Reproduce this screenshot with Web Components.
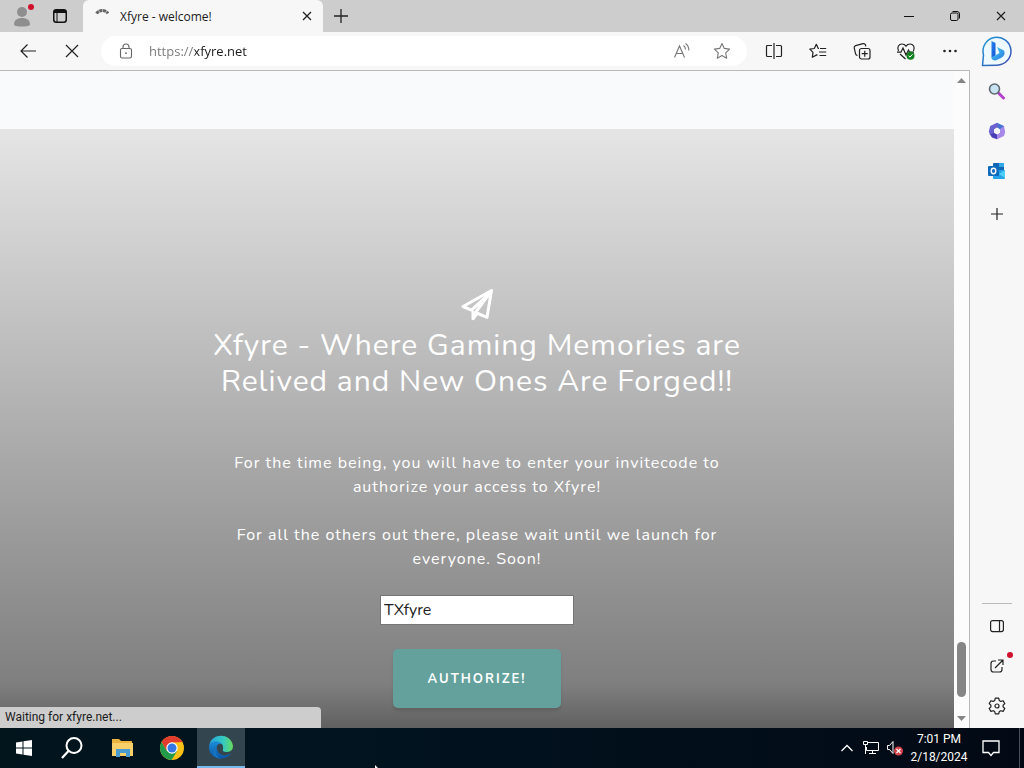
<!DOCTYPE html>
<html lang="en">
<head>
<meta charset="utf-8">
<title>Xfyre - welcome!</title>
<style>
html, body { height: 100%; margin: 0; }
body { font-family: "Open Sans", "Noto Sans", sans-serif; font-size: 12px; color: #1b1b1b; overflow: hidden; }
</style>
</head>
<body>
<desktop-screen></desktop-screen>
<script>
const ICONS = {
  person: [24, '<circle cx="12" cy="8" r="5" fill="#8e8e8e"/><path d="M4 21c0-5 3-7 8-7s8 2 8 7c-3 2-13 2-16 0z" fill="#8e8e8e"/><circle cx="21" cy="3" r="3" fill="#d0112b"/>'],
  workspace: [14, '<rect x=".75" y=".75" width="12.5" height="12.5" rx="2.5" fill="none" stroke="#111" stroke-width="1.5"/><path d="M1 1h12v3H1z" fill="#111"/><path d="M4 4v9" stroke="#111"/>'],
  spinner: [14, '<path d="M1.500 4.500A7 7 0 0 1 13 4.500" fill="none" stroke="#666" stroke-width="3" stroke-dasharray="3.200 .5"/>'],
  close: [10, '<path d="M1 1l8 8M9 1L1 9" stroke="#222" stroke-width="1.3"/>'],
  plus: [14, '<path d="M7 0v14M0 7h14" stroke="#222" stroke-width="1.3"/>'],
  plusSmall: [14, '<path d="M7 1v12M1 7h12" stroke="#222" stroke-width="1.200"/>'],
  minimize: [10, '<path d="M0 5.5h10" stroke="#111"/>'],
  restore: [10, '<rect x=".5" y="2" width="7.5" height="7.5" rx="1.5" fill="none" stroke="#111"/><path d="M2.5 .5H7a2.5 2.5 0 0 1 2.5 2.5v4.500" fill="none" stroke="#111"/>'],
  back: [16, '<path d="M7.500 1.500L1 8l6.500 6.500M1 8h15" fill="none" stroke="#222" stroke-width="1.2"/>'],
  stop: [14, '<path d="M1 1l12 12M13 1L1 13" stroke="#222" stroke-width="1.2"/>'],
  lock: [16, '<rect x="2.500" y="5.500" width="11" height="9.500" rx="1.500" fill="none" stroke="#666" stroke-width="1.1"/><path d="M5 5.500V4a3 3 0 0 1 6 0v1.500" fill="none" stroke="#666" stroke-width="1.1"/><circle cx="8" cy="10.200" r=".9" fill="#666"/>'],
  aloud: [18, '<path d="M1.500 15.500L6.500 4l5 11.500M3.200 11.500h6.600M10.500 3.500q2 1.500 2 4M12.500 1.500q3.500 2.500 3.300 7" fill="none" stroke="#777" stroke-width="1.100"/>'],
  star: [18, '<path d="M9 1.500l2.300 4.900 5.300.7-3.900 3.700 1 5.400L9 13.600l-4.700 2.600 1-5.400L1.400 7.100l5.300-.7z" fill="none" stroke="#777" stroke-width="1.100" stroke-linejoin="round"/>'],
  split: [18, '<path d="M9 1v16M7 3.500H2.500Q1.500 3.500 1.500 4.500v9q0 1 1 1H7M11 3.500h4.500q1 0 1 1v9q0 1-1 1H11" fill="none" stroke="#222" stroke-width="1.200"/>'],
  favs: [18, '<path d="M10 6.500H9.300L7.300 2.300l-2 4.200-4.500.7 3.200 3.200-.7 4.800 4.400-2.300.8.400M11 6.500h6.200M10 10h7.200M10.500 13.500h6.700" fill="none" stroke="#222" stroke-width="1.200" stroke-linejoin="round"/>'],
  collections: [18, '<rect x="6.500" y="6.500" width="10.500" height="10.500" rx="2" fill="none" stroke="#222" stroke-width="1.200"/><path d="M11.750 8.700v6M8.700 11.700h6M4.500 13.500Q3 13.200 2.600 11.800L1.200 6Q.9 4.200 2.600 3.600L10 1.600q1.800-.4 2.400 1.200l.4 1.500" fill="none" stroke="#222" stroke-width="1.200"/>'],
  heart: [20, '<path d="M2.500 10C.5 6 3 3 6 3q2.500 0 4 2.200Q11.500 3 14 3c3 0 5.500 3 3.500 7M4 13l5.500 5M1 11.200h4l2-4.200 3 7 2.500-5 1.200 2.200H18" fill="none" stroke="#222" stroke-width="1.200"/><circle cx="14.500" cy="14.700" r="4" fill="#138021"/><path d="M12.600 14.800l1.400 1.300 2.500-2.800" fill="none" stroke="#fff"/>'],
  dots: [16, '<g fill="#222"><circle cx="2.500" cy="8" r="1.300"/><circle cx="8" cy="8" r="1.300"/><circle cx="13.500" cy="8" r="1.300"/></g>'],
  bing: [32, '<defs><linearGradient id="a" x2="1" y2="1"><stop stop-color="#1b9bd8"/><stop offset="1" stop-color="#404ab0"/></linearGradient><linearGradient id="b" x2="1" y2="1"><stop stop-color="#2785f0"/><stop offset="1" stop-color="#1553d0"/></linearGradient><linearGradient id="c" x2="1" y2="1"><stop stop-color="#45d0f7"/><stop offset="1" stop-color="#2b78e0"/></linearGradient></defs><path d="M1.500 30.500L2.500 20A14 14 0 1 1 16 30.200z" fill="#eefaff" stroke="url(#a)" stroke-width="1.500" stroke-linejoin="round"/><path d="M10.500 6l4 2v12.500l-4 2.500z" fill="url(#b)"/><path d="M16 12l7 3.500q2 4.500-3 7.500l-5.500 2.500q-4 0-4-3l8-4.500z" fill="url(#c)"/>'],
  searchColor: [18, '<path d="M10.500 11l5 5" stroke="#b441ca" stroke-width="3" stroke-linecap="round"/><circle cx="6.500" cy="7" r="5" fill="#c8e4f2" stroke="#606970" stroke-width="1.600"/>'],
  m365: [18, '<path d="M9 .8L16 4v5h-4.500V7.300L9 5.800z" fill="#4674d2"/><path d="M9 .8L2.200 4 .8 9.500 2 13l4.500-2V7.300l4-2.500z" fill="#6c62cf"/><path d="M2 12.500L6.500 10.500 9 12.300l4.500 1L9 17.300 4 15.500z" fill="#4c3eb4"/><path d="M16 4l1.200 6-1.200 4-7 3.300v-5l2.500-1.500V7.500z" fill="#a688e8"/><path d="M9 5.600l3 1.800v3.400l-3 1.800-3-1.800V7.400z" fill="#f7f7f7"/>'],
  outlook: [18, '<rect x="5" y="1" width="11" height="9" rx="1" fill="#1066b5"/><path d="M11 1h5v4h-5z" fill="#32a9e7"/><path d="M5 8h12v8q0 1-1 1H6q-1 0-1-1z" fill="#25a4e8"/><path d="M17 8v8l-6-4z" fill="#50d0f8"/><rect x="0" y="4" width="11" height="10" rx="1" fill="#0f6cbd"/><ellipse cx="5.500" cy="9" rx="2.300" ry="2.700" fill="none" stroke="#fff" stroke-width="1.400"/>'],
  pane: [14, '<rect x=".6" y="1.600" width="12.800" height="11" rx="2" fill="none" stroke="#222" stroke-width="1.200"/><path d="M9.500 2v10" stroke="#222" stroke-width="1.200"/>'],
  external: [14, '<path d="M6 2H3.500Q1 2 1 4.500v6Q1 13 3.500 13h6Q12 13 12 10.500V8M8 1h5v5M13 1L5 9" fill="none" stroke="#222" stroke-width="1.200"/>'],
  gear: [18, '<path d="M7.300 1.200h3.400l.6 2.300 1.500.9 2.300-.7 1.700 2.900-1.700 1.600v1.700l1.700 1.600-1.700 2.900-2.300-.7-1.500.9-.6 2.300H7.300l-.6-2.300-1.500-.9-2.300.7-1.700-2.900 1.700-1.600V8.200L1.200 6.600l1.700-2.900 2.300.7 1.500-.9z" fill="none" stroke="#222" stroke-width="1.200" stroke-linejoin="round"/><circle cx="9" cy="9" r="2" fill="none" stroke="#222" stroke-width="1.200"/>'],
  up: [9, '<path d="M0 7L4.500 2 9 7z" fill="#858585"/>'],
  down: [9, '<path d="M0 2l4.500 5L9 2z" fill="#858585"/>'],
  plane: [32, '<path d="M30.500 1.500L2 17.500l8.500 3.600L28 5 14.500 23.500l11.500 4.800z" fill="none" stroke="#fff" stroke-width="3" stroke-linejoin="round"/><path d="M10.500 20.500v10q1.500 1.500 3 0l4-5.500-3-1.500z" fill="#fff"/>'],
  windows: [18, '<path d="M1 3.500l6.500-1V8.500H1zM8.500 2.300L17 1v7.500H8.500zM1 9.500h6.500v6L1 14.500zM8.500 9.500H17V17l-8.500-1.300z" fill="#fff"/>'],
  find: [24, '<circle cx="14" cy="9.500" r="7.500" fill="none" stroke="#fff" stroke-width="2"/><path d="M8.500 15L2 22" stroke="#fff" stroke-width="2.200"/>'],
  folder: [24, '<path d="M2 3h7l2 2h11v15H2z" fill="#e9b43e"/><path d="M2 7h21v13H2z" fill="#f8d06a"/><path d="M6 13h14v8h-4v-4h-6v4H6z" fill="#4a9cd0"/>'],
  chrome: [24, '<circle cx="12" cy="12" r="12" fill="#fbc116"/><path d="M1.600 6A12 12 0 0 1 22.400 6L12 6.500 6.800 15z" fill="#e33b2e"/><path d="M1.600 6A12 12 0 0 0 11.500 24L17.200 15 6.800 15z" fill="#229a4c"/><circle cx="12" cy="12" r="5.700" fill="#fff"/><circle cx="12" cy="12" r="4.500" fill="#3577e5"/>'],
  edge: [24, '<defs><linearGradient id="e" x2="1"><stop stop-color="#25a5dd"/><stop offset=".6" stop-color="#36c9c0"/><stop offset="1" stop-color="#67dc5c"/></linearGradient><linearGradient id="f" y2="1" x2="0"><stop stop-color="#1b8ed8"/><stop offset="1" stop-color="#0c55a8"/></linearGradient></defs><path d="M.5 10C2-2 22-3 24 11q0 6-7 6-4 0-3-3 1-6-5-6-5 0-8.500 2z" fill="url(#e)"/><path d="M0 12c0-6 9-8 13-3-5-1-6 3-5 6 2 6 9 7 14 3C17 27 0 25 0 12z" fill="url(#f)"/><path d="M8 11q-4 9 4 13Q3 23 4 15q0-3 4-4z" fill="#1774be"/>'],
  chevron: [12, '<path d="M.5 9L6 3.500 11.500 9" fill="none" stroke="#fff" stroke-width="1.300"/>'],
  network: [16, '<path d="M5 2.500h10.500v8H3.500V7M6 13.500h7M9.500 10.500v3M.5 1.500h4v3h-4zM2.500 5v9" fill="none" stroke="#fff"/>'],
  speaker: [16, '<path d="M.5 5.500h2l3.500-4v12l-3.500-4h-2z" fill="none" stroke="#fff"/><circle cx="11.500" cy="11" r="4.500" fill="#d6434c"/><path d="M9.500 9l4 4M13.500 9l-4 4" stroke="#fff" stroke-width="1.200"/>'],
  notice: [18, '<path d="M1 2h16v11.500h-5.500L9 16.500l-2.500-3H1z" fill="none" stroke="#fff" stroke-width="1.300"/>'],
  cursor: [6, '<path d="M0 0l5 5v1H0z" fill="#fff"/>']
};

function define(name, css, html) {
  const template = document.createElement('template');
  template.innerHTML = '<style>*{box-sizing:border-box}button{font:inherit;color:inherit;border:0;padding:0;margin:0;background:none;display:flex;align-items:center;justify-content:center}' + css + '</style>' + html;
  customElements.define(name, class extends HTMLElement {
    constructor() {
      super();
      this.attachShadow({ mode: 'open' }).append(template.content.cloneNode(true));
    }
  });
}

customElements.define('ui-icon', class extends HTMLElement {
  connectedCallback() {
    if (this.shadowRoot) return;
    const [size, art] = ICONS[this.getAttribute('name')];
    this.attachShadow({ mode: 'open' }).innerHTML =
      `<style>:host{display:block;flex:none}svg{display:block}</style><svg width="${size}" height="${size}" viewBox="0 0 ${size} ${size}" aria-hidden="true">${art}</svg>`;
  }
});

define('tab-strip', `
:host{display:flex;height:32px;background:#cdcdcd;flex:none}
.left{display:flex;align-items:center;width:83px;padding:0 16px 0 10px;justify-content:space-between}
.tab{display:flex;align-items:center;width:240px;background:#f7f7f7;border-radius:6px 6px 0 0;padding:0 10px 0 12px;gap:11px}
.tab span{flex:1;white-space:nowrap}
.tab button{width:12px;height:20px}
.add{width:35px}
.window{display:flex;margin-left:auto}
.window button{width:46px}
`, `
<div class="left"><button aria-label="Profile"><ui-icon name="person"></ui-icon></button><button aria-label="Workspaces"><ui-icon name="workspace"></ui-icon></button></div>
<div class="tab"><ui-icon name="spinner"></ui-icon><span>Xfyre - welcome!</span><button aria-label="Close tab"><ui-icon name="close"></ui-icon></button></div>
<button class="add" aria-label="New tab"><ui-icon name="plus"></ui-icon></button>
<div class="window"><button aria-label="Minimize"><ui-icon name="minimize"></ui-icon></button><button aria-label="Restore"><ui-icon name="restore"></ui-icon></button><button aria-label="Close"><ui-icon name="close"></ui-icon></button></div>`);

define('address-bar', `
:host{display:flex;align-items:center;height:39px;flex:none;background:#f7f7f7;border-bottom:1px solid #b9b9b9;padding:0 9px 0 6px}
.nav{width:44px;height:32px}
.box{display:flex;align-items:center;flex:1;height:30px;margin:0 17px 0 7px;padding:0 16px;border-radius:15px;background:#fff;gap:14px}
.box button{width:18px}
.box button+button{margin-left:8px}
input{flex:1;min-width:0;border:0;outline:0;padding:0;font:13px "Open Sans",sans-serif;color:#222;-webkit-text-fill-color:transparent;background:linear-gradient(90deg,#777 46px,#1b1b1b 46px);-webkit-background-clip:text;background-clip:text}
.tools{display:flex;gap:24px}
.tools button{width:20px;height:32px}
`, `
<button class="nav" aria-label="Back"><ui-icon name="back"></ui-icon></button><button class="nav" aria-label="Stop"><ui-icon name="stop"></ui-icon></button>
<div class="box"><button aria-label="Site information"><ui-icon name="lock"></ui-icon></button><input aria-label="Address" value="https://xfyre.net" spellcheck="false"><button aria-label="Read aloud"><ui-icon name="aloud"></ui-icon></button><button aria-label="Add to favorites"><ui-icon name="star"></ui-icon></button></div>
<div class="tools"><button aria-label="Split screen"><ui-icon name="split"></ui-icon></button><button aria-label="Favorites"><ui-icon name="favs"></ui-icon></button><button aria-label="Collections"><ui-icon name="collections"></ui-icon></button><button aria-label="Browser essentials"><ui-icon name="heart"></ui-icon></button><button aria-label="More"><ui-icon name="dots"></ui-icon></button></div>`);

define('invite-form', `
:host{display:block;font-family:"Nunito","Noto Sans",sans-serif}
form{display:flex;flex-direction:column;align-items:center;color:#fff;text-align:center;letter-spacing:1px;padding:160px 0;background:linear-gradient(to bottom,rgba(0,0,0,.1) 0,rgba(0,0,0,.5) 75%,#000 100%),#fff}
h2{margin:7px 0 51px;font-size:30px;line-height:36px;font-weight:400}
p{margin:0 0 24px;font-size:16px;line-height:24px}
input{width:194px;height:30px;border:1px solid #767676;padding:0 3px;background:#fff;color:#222;font:16px "Nunito","Noto Sans",sans-serif;border-radius:0}
button{margin-top:24px;width:168px;height:59px;border-radius:5px;background:#64a19d;font-size:13px;font-weight:700;letter-spacing:2px;box-shadow:0 3px 3px rgba(0,0,0,.1)}
`, `
<form onsubmit="return false"><ui-icon name="plane"></ui-icon>
<h2>Xfyre - Where Gaming Memories are<br>Relived and New Ones Are Forged!!</h2>
<p>For the time being, you will have to enter your invitecode to<br>authorize your access to Xfyre!</p>
<p>For all the others out there, please wait until we launch for<br>everyone. Soon!</p>
<input aria-label="Invite code" value="TXfyre" spellcheck="false">
<button type="submit">AUTHORIZE!</button></form>`);

define('page-view', `
:host{display:flex;flex:1;min-height:0;position:relative;background:#fff}
.page{flex:1;overflow:hidden}
.intro{height:58px;background:#f8fafc}
.scroll{width:15px;background:#fcfcfc;display:flex;flex-direction:column;align-items:center;padding:5px 0}
.thumb{width:9px;height:55px;border-radius:5px;background:#858585;margin-top:auto;margin-bottom:17px}
.status{position:absolute;left:0;bottom:0;width:321px;height:21px;padding:0 5px;font-family:Roboto,sans-serif;line-height:21px;background:#cdcdcd;border-top-right-radius:4px}
`, `<div class="page"><div class="intro"></div><slot></slot></div>
<div class="scroll"><ui-icon name="up"></ui-icon><div class="thumb"></div><ui-icon name="down"></ui-icon></div>
<div class="status">Waiting for xfyre.net...</div>`);

define('side-bar', `
:host{display:flex;flex-direction:column;width:55px;background:#f7f7f7;flex:none}
button{height:40px;width:100%;flex:none;position:relative}
.add{margin-top:3px}
.rest{display:flex;flex-direction:column;flex:1;align-items:center;border-left:1px solid #b9b9b9;padding:1px 0 2px}
.head{height:38px}
hr{width:30px;border:0;border-top:1px solid #bbb;margin:auto 0 2px}
i{position:absolute;left:37px;top:6px;width:6px;height:6px;border-radius:50%;background:#d0112b}
`, `<button class="head" aria-label="Bing Chat"><ui-icon name="bing"></ui-icon></button>
<div class="rest"><button aria-label="Search"><ui-icon name="searchColor"></ui-icon></button><button aria-label="Microsoft 365"><ui-icon name="m365"></ui-icon></button><button aria-label="Outlook"><ui-icon name="outlook"></ui-icon></button><button class="add" aria-label="Customize"><ui-icon name="plusSmall"></ui-icon></button>
<hr><button aria-label="Hide sidebar"><ui-icon name="pane"></ui-icon></button><button aria-label="Open in new window"><ui-icon name="external"></ui-icon><i></i></button><button aria-label="Settings"><ui-icon name="gear"></ui-icon></button></div>`);

define('task-bar', `
:host{display:flex;height:40px;flex:none;background:linear-gradient(90deg,#02151d,#01131f 40%,#020914);color:#fff;position:relative}
.apps{display:flex}
.apps button{width:48px}
.apps button+button+button{margin-left:2px}
.apps .active{background:#33454f;border-bottom:2px solid #76b9ed;margin-left:1px}
.tray{display:flex;align-items:center;margin-left:auto;border-right:1px solid #46505a;margin-right:4px}
.tray button{width:24px;height:40px}
.tray .clock{display:block;width:62px;font-family:Roboto,sans-serif;line-height:18px;text-align:center;white-space:nowrap;margin-left:1px}
.tray .notice{width:49px;padding-right:7px}
.cursor{position:absolute;left:375px;bottom:-3px}
`, `<div class="apps"><button aria-label="Start"><ui-icon name="windows"></ui-icon></button><button aria-label="Search"><ui-icon name="find"></ui-icon></button><button aria-label="File Explorer"><ui-icon name="folder"></ui-icon></button><button aria-label="Chrome"><ui-icon name="chrome"></ui-icon></button><button class="active" aria-label="Edge"><ui-icon name="edge"></ui-icon></button></div>
<div class="tray"><button aria-label="Hidden icons"><ui-icon name="chevron"></ui-icon></button><button aria-label="Network"><ui-icon name="network"></ui-icon></button><button aria-label="Volume"><ui-icon name="speaker"></ui-icon></button><button class="clock">7:01 PM<br>2/18/2024</button><button class="notice" aria-label="Notifications"><ui-icon name="notice"></ui-icon></button></div>
<ui-icon class="cursor" name="cursor"></ui-icon>`);

define('desktop-screen', `
:host{display:flex;flex-direction:column;height:100vh}
.browser{display:flex;flex:1;min-height:0}
.main{display:flex;flex-direction:column;flex:1;min-width:0}
`, `<tab-strip></tab-strip><div class="browser"><div class="main"><address-bar></address-bar><page-view><invite-form></invite-form></page-view></div><side-bar></side-bar></div><task-bar></task-bar>`);
</script>
</body>
</html>
